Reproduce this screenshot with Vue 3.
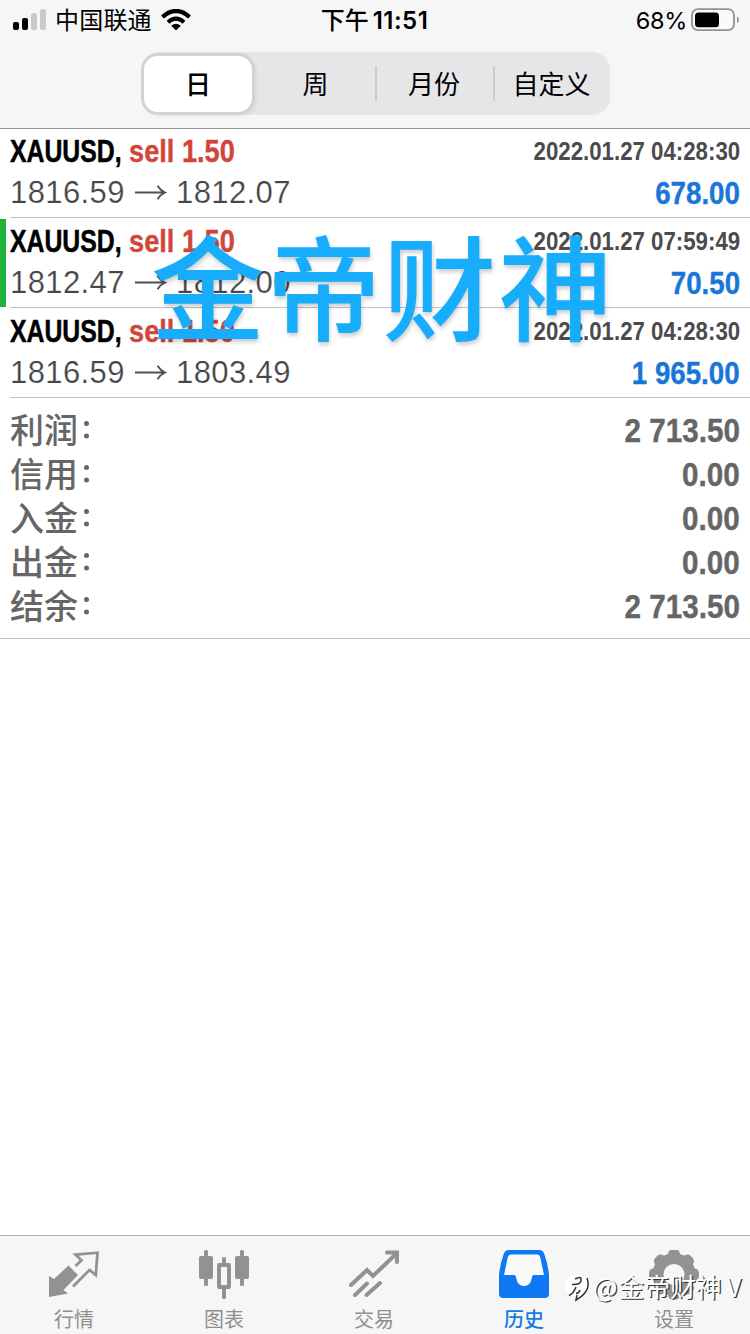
<script setup>
const periods = ['日', '周', '月份', '自定义']
const deals = [
  { time: '2022.01.27 04:28:30', open: '1816.59', close: '1812.07', profit: '678.00' },
  { time: '2022.01.27 07:59:49', open: '1812.47', close: '1812.00', profit: '70.50', marked: true },
  { time: '2022.01.27 04:28:30', open: '1816.59', close: '1803.49', profit: '1 965.00' },
]
const totals = [
  ['利润', '2 713.50'],
  ['信用', '0.00'],
  ['入金', '0.00'],
  ['出金', '0.00'],
  ['结余', '2 713.50'],
]
</script>

<template>
  <div class="screen">
    <header class="top">
      <div class="status">
        <div class="carrier">
          <svg class="signal" width="34" height="22" viewBox="0 0 34 22">
            <rect x="0" y="13" width="6" height="8" rx="2" fill="#000" />
            <rect x="9" y="9" width="6" height="12" rx="2" fill="#000" />
            <rect x="18" y="4" width="6" height="17" rx="2" fill="#c9c9c9" />
            <rect x="27" y="0" width="6" height="21" rx="2" fill="#c9c9c9" />
          </svg>
          <span class="carrier-name">中国联通</span>
          <svg class="wifi" width="30" height="22" viewBox="0 0 30 22">
            <path d="M1.500 8Q15-4 28.500 8" fill="none" stroke="#000" stroke-width="4.300" />
            <path d="M7 13.2Q15 6 23 13.2" fill="none" stroke="#000" stroke-width="4" />
            <path d="M10.2 16.8Q15 12.8 19.8 16.8L15 21.4Z" fill="#000" />
          </svg>
        </div>
        <div class="clock"><span class="ampm">下午</span><span>11:51</span></div>
        <div class="power">
          <span>68%</span>
          <svg width="48" height="24" viewBox="0 0 48 24">
            <rect x="1" y="1.2" width="42" height="21" rx="6" fill="#fafafa" stroke="#939393" stroke-width="1.800" />
            <rect x="4" y="4.4" width="24" height="14.8" rx="3.5" fill="#000" />
            <path d="M46 8.5q2 1 2 3.3t-2 3.3z" fill="#939393" />
          </svg>
        </div>
      </div>
      <nav class="segments">
        <span v-for="(p, i) in periods" :key="p" class="segment" :class="{ active: i === 0, split: i > 1 }">{{ p }}</span>
      </nav>
    </header>

    <main>
      <section v-for="(d, i) in deals" :key="i" class="deal" :class="{ marked: d.marked }">
        <div class="line first">
          <span class="name"><b class="symbol">XAUUSD,</b><b class="side">sell 1.50</b></span>
          <b class="time">{{ d.time }}</b>
        </div>
        <div class="line second">
          <span class="prices">
            <span class="price">{{ d.open }}</span>
            <svg class="arrow" width="32" height="18" viewBox="0 0 32 18">
              <path d="M0 8.500H29.5M22.5 1.7Q25.5 6.500 30 8.500Q25.5 10.500 22.5 15.3" fill="none" stroke="#505052" stroke-width="1.9" />
            </svg>
            <span class="price">{{ d.close }}</span>
          </span>
          <b class="profit">{{ d.profit }}</b>
        </div>
      </section>
      <section class="totals">
        <div v-for="t in totals" :key="t[0]" class="total">
          <span class="label">{{ t[0] }}<i class="colon"></i></span>
          <b class="sum">{{ t[1] }}</b>
        </div>
      </section>
    </main>

    <footer class="tabs">
      <div class="tab">
        <svg width="54" height="52" viewBox="0 0 54 52">
          <path d="M2 26L7 29L21.5 15.5L31 25L16.5 40L21 43.5L2 47Z" fill="#929292" />
          <path d="M28.5 16L34.5 10.2L28.5 4.7L50.500 2.7L48.800 25L42.5 20L26 36.5" fill="none" stroke="#929292" stroke-width="2.8" />
        </svg>
        <span>行情</span>
      </div>
      <div class="tab">
        <svg width="54" height="52" viewBox="0 0 54 52">
          <g fill="#929292">
            <rect x="7" y="0" width="4" height="36" rx="1.5" /><rect x="2" y="6" width="14" height="23" rx="2" />
            <rect x="25" y="7" width="4" height="42" rx="1.5" /><rect x="20" y="13" width="14" height="26" rx="2" />
            <rect x="43" y="0" width="4" height="36" rx="1.5" /><rect x="38" y="6" width="14" height="23" rx="2" />
          </g>
          <rect x="24" y="17" width="6" height="18" fill="#f6f6f6" />
        </svg>
        <span>图表</span>
      </div>
      <div class="tab">
        <svg width="54" height="52" viewBox="0 0 54 52" fill="none" stroke="#929292" stroke-width="4" stroke-linecap="round">
          <path d="M4 35L20 20L26 26L49 4M40 2.500H50V12M8 45L20 33.5M19.5 45L33 33" />
        </svg>
        <span>交易</span>
      </div>
      <div class="tab current">
        <svg width="54" height="52" viewBox="0 0 54 52">
          <path d="M12 0H42Q46 0 47.3 4Q51 14 52 25V44Q52 48 48 48H6Q2 48 2 44V25Q3 14 6.700 4Q8 0 12 0Z" fill="#0f79f3" />
          <path d="M14 4.500H40Q42.500 4.500 43.300 7.500L47 25H37Q35 25 34.800 28Q33.500 36 27 36Q20.500 36 19.200 28Q19 25 17 25H7L10.700 7.500Q11.500 4.500 14 4.500Z" fill="#fafafa" />
        </svg>
        <span>历史</span>
      </div>
      <div class="tab">
        <svg width="54" height="52" viewBox="0 0 54 52">
          <g fill="#929292">
            <circle cx="27" cy="24.500" r="21.500" />
            <rect v-for="n in 8" :key="n" x="21" y="-0.500" width="12" height="14" rx="4.500" :transform="`rotate(${n * 45} 27 24.500)`" />
          </g>
          <circle cx="27" cy="24.500" r="10.500" fill="#f6f6f6" />
        </svg>
        <span>设置</span>
      </div>
    </footer>

    <div class="big-mark">金帝财神</div>
    <div class="author">
      <svg width="30" height="32" viewBox="0 0 30 32">
        <path d="M6 5Q15 2 22 5Q28 8 26 17Q23 25 14 30L15 25Q5 26 3 19Q0 9 6 5Z" fill="#fff" />
        <path d="M12 8Q19 4 18 10Q17 14 9 13.500M13 16Q11 22 6 24.500M24 7Q29 20 13 29L14 24M17 19Q16 22.500 13 22.500" fill="none" stroke="#333" stroke-width="1.500" />
      </svg>
      <span class="handle"><span class="at">@</span>金帝财神<span class="vee">V</span></span>
    </div>
  </div>
</template>

<style>
body {
  margin: 0;
  background: #fff;
}
</style>

<style scoped>
.screen {
  position: relative;
  width: 750px;
  height: 1334px;
  overflow: hidden;
  display: flex;
  flex-direction: column;
  background: #fff;
  color: #000;
  font-family: "Liberation Sans", "Noto Sans CJK SC", sans-serif;
}
svg { display: block; flex: none; }
.top {
  box-sizing: border-box;
  height: 129px;
  flex: none;
  background: #f6f6f6;
  border-bottom: 1.500px solid #949494;
}
.status {
  height: 40px;
  margin-bottom: 12px;
  padding: 0 11px 0 13px;
  display: grid;
  grid-template-columns: 1fr auto 1fr;
  align-items: center;
  font: 24px/40px Inter, "Noto Sans CJK SC", sans-serif;
}
.carrier { display: flex; align-items: center; }
.carrier-name { margin: 0 9px 0 8px; padding-top: 2px; line-height: 38px; letter-spacing: 0.200px; }
.clock {
  display: flex;
  gap: 4px;
  margin-right: 3px;
  padding-top: 2px;
  line-height: 38px;
  font-weight: 600;
  font-size: 24px;
  letter-spacing: 0.500px;
}
.ampm { font-weight: 500; letter-spacing: 0; }
.power { display: flex; justify-content: flex-end; align-items: center; gap: 4px; font-size: 23.500px; }
.power span { padding-top: 2px; line-height: 38px; letter-spacing: -0.300px; }
.segments {
  box-sizing: border-box;
  width: 469px;
  height: 63px;
  margin: 0 auto;
  position: relative;
  left: 0.500px;
  display: grid;
  grid-template-columns: 115px 119px 118px 117px;
  border-radius: 18px;
  background: #e6e6e8;
}
.segment {
  box-sizing: border-box;
  display: flex;
  align-items: center;
  justify-content: center;
  height: 63px;
  padding-bottom: 2px;
  font-size: 26px;
  font-family: "Noto Sans CJK SC", sans-serif;
}
.segment.active {
  height: 56px;
  width: 108px;
  margin: 4px 0 0 3px;
  padding-bottom: 3px;
  border-radius: 14px;
  background: #fff;
  box-shadow: 0 0 0 3px #d2d2d3, 2px 2px 6px #0002;
  font-weight: 500;
}
.segment.split {
  background: linear-gradient(#cdcdcf, #cdcdcf) 0 14px / 2px 35px no-repeat;
}
.deal {
  box-sizing: border-box;
  height: 90px;
  padding: 0 10px;
  background: linear-gradient(#c2c2c4, #c2c2c4) 10px 88px / 740px 1px no-repeat;
}
.deal.marked {
  background:
    linear-gradient(#c2c2c4, #c2c2c4) 10px 88px / 740px 1px no-repeat,
    linear-gradient(#1fb23c, #1fb23c) 0 0 / 6px 88px no-repeat;
}
.line { display: flex; justify-content: space-between; white-space: nowrap; }
.first { height: 43px; line-height: 44px; }
.second { height: 41px; line-height: 41px; }
.name { display: flex; font-size: 32px; }
.symbol, .side { display: block; transform-origin: left; }
.symbol { width: 118.500px; transform: scaleX(0.775); -webkit-text-stroke: 0.500px #000; }
.side { transform: scaleX(0.850); color: #d2453a; -webkit-text-stroke: 0.400px #d2453a; }
.time {
  color: #4b4b4d;
  font-size: 25px;
  transform: scaleX(0.890);
  transform-origin: right;
}
.prices { display: flex; align-items: center; color: #464648; font-size: 31px; letter-spacing: 0.400px; }
.price { width: 115px; -webkit-text-stroke: 0.200px #fff; }
.arrow { margin: 0 9px 0 10px; }
.profit {
  color: #1976d9;
  font-size: 32px;
  line-height: 43px;
  transform: scaleX(0.865);
  transform-origin: right;
  -webkit-text-stroke: 0.400px #1976d9;
}
.totals {
  box-sizing: border-box;
  height: 240px;
  padding: 9px 10px 0;
  border-bottom: 1px solid #c0c0c2;
}
.total { display: flex; justify-content: space-between; height: 44px; line-height: 44px; color: #666; }
.label {
  display: flex;
  align-items: center;
  font: 500 34px/42px "Noto Sans CJK SC", sans-serif;
  height: 42px;
}
.colon {
  width: 5px;
  height: 5px;
  margin: -11px 0 0 6px;
  border-radius: 50%;
  background: #666;
  box-shadow: 0 12.500px #666;
}
.sum {
  font-size: 33.500px;
  line-height: 45px;
  transform: translateX(-0.500px) scaleX(0.885);
  transform-origin: right;
  -webkit-text-stroke: 0.400px #666;
}
.tabs {
  box-sizing: border-box;
  height: 99px;
  margin-top: auto;
  padding-top: 14px;
  display: grid;
  grid-template-columns: repeat(5, 150px);
  position: relative;
  left: -1px;
  width: 752px;
  border-top: 1.500px solid #b2b2b2;
  background: #f6f6f6;
}
.tab {
  display: flex;
  flex-direction: column;
  align-items: center;
  color: #8f8f8f;
  font: 20px/34px "Noto Sans CJK SC", sans-serif;
}
.current { color: #147be5; font-weight: 500; }
.big-mark {
  position: absolute;
  left: 151px;
  top: 200px;
  color: #18acfd;
  font: 500 114px/165px "Noto Sans CJK SC", sans-serif;
  letter-spacing: 1.800px;
  white-space: nowrap;
  text-shadow: 1px 3px 4px #0003;
}
.author {
  position: absolute;
  left: 563px;
  top: 1271px;
  display: flex;
  align-items: center;
  color: #fff;
  font: 25.800px/32px "Noto Sans CJK SC", sans-serif;
  white-space: nowrap;
}
.handle { margin-top: -2px; text-shadow: 1.200px 1.200px 0.500px #333; }
.at { margin-right: 1px; }
.vee { margin-left: 5px; }
</style>
